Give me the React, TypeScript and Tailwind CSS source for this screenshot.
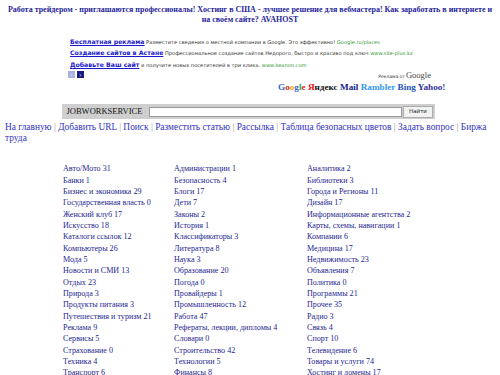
import React from "react";

const col1 = ["Авто/Мото 31","Банки 1","Бизнес и экономика 29","Государственная власть 0","Женский клуб 17","Искусство 18","Каталоги ссылок 12","Компьютеры 26","Мода 5","Новости и СМИ 13","Отдых 23","Природа 3","Продукты питания 3","Путешествия и туризм 21","Реклама 9","Сервисы 5","Страхование 0","Техника 4","Транспорт 6"];
const col2 = ["Администрации 1","Безопасность 4","Блоги 17","Дети 7","Законы 2","История 1","Классификаторы 3","Литература 8","Наука 3","Образование 20","Погода 0","Провайдеры 1","Промышленность 12","Работа 47","Рефераты, лекции, дипломы 4","Словари 0","Строительство 42","Технологии 5","Финансы 8"];
const col3 = ["Аналитика 2","Библиотеки 3","Города и Регионы 11","Дизайн 17","Информационные агентства 2","Карты, схемы, навигации 1","Компании 6","Медицина 17","Недвижимость 23","Объявления 7","Политика 0","Программы 21","Прочее 35","Радио 3","Связь 4","Спорт 10","Телевидение 6","Товары и услуги 74","Хостинг и домены 17"];

const nav = ["На главную","Добавить URL","Поиск","Разместить статью","Рассылка","Таблица безопасных цветов","Задать вопрос","Биржа труда"];

function Col({ items }: { items: string[] }) {
  return (
    <div className="flex flex-col">
      {items.map((t) => (
        <div key={t} className="h-[11.33px] leading-[11.33px] text-[8.1px] text-[#26268f] whitespace-nowrap">{t}</div>
      ))}
    </div>
  );
}

export default function App() {
  return (
    <div className="w-[500px] h-[375px] overflow-hidden bg-white font-['Liberation_Serif','Times_New_Roman',serif]">
      <div className="pt-[4.5px] px-[6px] text-center font-bold text-[8px] leading-[10.7px] text-[#1f1f99]">
        Работа трейдером - приглашаются профессионалы! Хостинг в США - лучшее решение для вебмастера! Как заработать в интернете и на своём сайте? AVAHOST
      </div>
      <div className="mt-[10px] ml-[70px] flex flex-col text-[5.1px] leading-[11.5px] text-[#333] font-['DejaVu_Sans',sans-serif]">
        <div className="h-[11.5px] whitespace-nowrap"><span className="font-bold underline text-[#1a1acc] text-[6.2px]">Бесплатная реклама</span> Разместите сведения о местной компании в Google. Это эффективно! <span className="text-[#339933]">Google.ru/places</span></div>
        <div className="h-[11.5px] whitespace-nowrap"><span className="font-bold underline text-[#1a1acc] text-[6.2px]">Создание сайтов в Астане</span> Профессиональное создание сайтов Недорого, быстро и красиво под ключ <span className="text-[#339933]">www.site-plus.kz</span></div>
        <div className="h-[11.5px] whitespace-nowrap"><span className="font-bold underline text-[#1a1acc] text-[6.2px]">Добавьте Ваш сайт</span> и получите новых посетителей в три клика. <span className="text-[#339933]">www.keanon.com</span></div>
      </div>
      <div className="flex items-center ml-[68px] h-[9px]">
        <div className="w-[7px] h-[7px] bg-[#aab0e0] flex items-center justify-center text-white text-[6px] leading-none font-['DejaVu_Sans',sans-serif]">‹</div>
        <div className="w-[7px] h-[7px] ml-[2px] bg-[#1a1a80] flex items-center justify-center text-white text-[6px] leading-none font-['DejaVu_Sans',sans-serif]">›</div>
        <div className="ml-auto mr-[69px] flex items-baseline text-[#333]">
          <span className="text-[4.5px] font-['DejaVu_Sans',sans-serif]">Реклама от</span>
          <span className="ml-[1px] text-[8.5px] text-[#444]">Google</span>
        </div>
      </div>
      <div className="mt-[2px] ml-[278px] h-[12px] font-bold text-[9.2px] leading-[12px] whitespace-nowrap">
        <span className="text-[#3366dd]">G</span><span className="text-[#dd2222]">o</span><span className="text-[#eeaa00]">o</span><span className="text-[#3366dd]">g</span><span className="text-[#22aa44]">l</span><span className="text-[#dd2222]">e</span>{" "}
        <span className="text-[#dd1111]">Я</span><span className="text-[#111]">ндекс</span>{" "}
        <span className="text-[#1a2288]">Mail</span>{" "}
        <span className="text-[#3399ee]">Rambler</span>{" "}
        <span className="text-[#2255bb]">Bing</span>{" "}
        <span className="text-[#333399]">Yahoo!</span>
      </div>
      <div className="mt-[10.7px] ml-[62px] w-[373px] h-[15px] bg-[#cfcfcf] flex items-center pl-[4.5px]">
        <span className="w-[82.5px] text-[8.5px] text-[#111] leading-none whitespace-nowrap">JOBWORKSERVICE</span>
        <div className="w-[253px] h-[10px] bg-white border border-[#999]" />
        <div className="ml-[1px] h-[12px] w-[30px] bg-[#f2f2f2] border border-[#aaa] flex items-center justify-center text-[5.5px] text-[#222] font-['DejaVu_Sans',sans-serif]">Найти</div>
      </div>
      <div className="mt-[3px] px-[5px] text-[9.4px] leading-[10.4px] text-[#3333bb]">
        {nav.map((n, i) => (
          <React.Fragment key={n}>
            {i > 0 && <span className="text-[#999]"> | </span>}
            <span>{n}</span>
          </React.Fragment>
        ))}
      </div>
      <div className="mt-[20.5px] ml-[63px] grid grid-cols-[111px_133px_1fr]">
        <Col items={col1} />
        <Col items={col2} />
        <Col items={col3} />
      </div>
    </div>
  );
}
